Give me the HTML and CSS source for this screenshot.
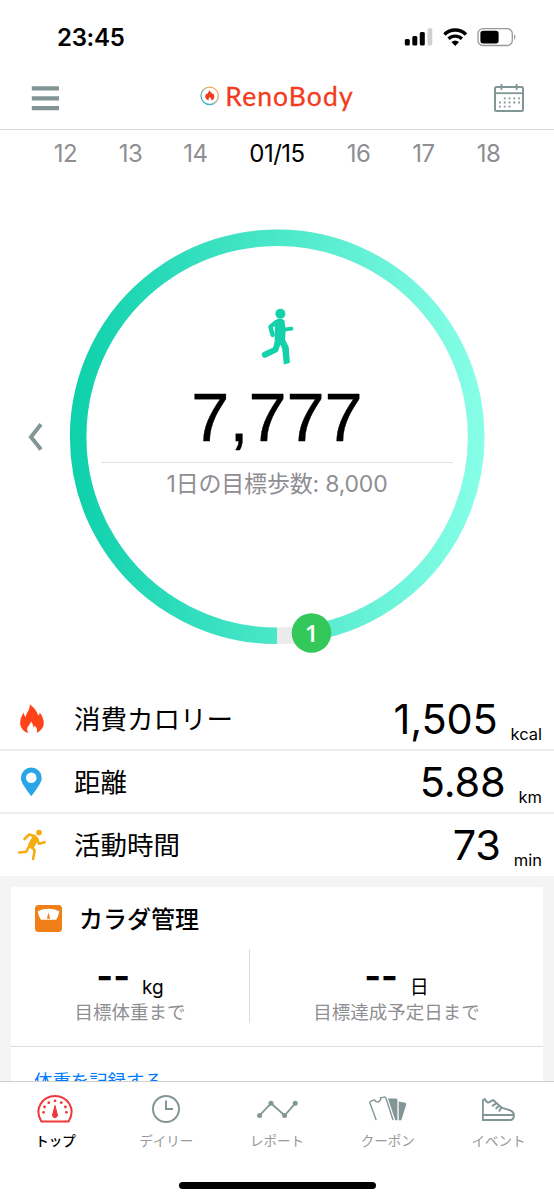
FILE: index.html
```html
<!DOCTYPE html>
<html lang="ja">
<head>
<meta charset="utf-8">
<meta name="viewport" content="width=device-width, initial-scale=1">
<title>RenoBody</title>
<link rel="stylesheet" href="styles.css">
</head>
<body>
<div class="app">
  <div class="status">
    <span class="clock">23:45</span>
    <svg class="status-icons" width="113" height="20" viewBox="0 0 113 20">
      <rect x="0.8" y="11" width="5" height="6.5" rx="1.5"/>
      <rect x="8.3" y="8" width="5" height="9.5" rx="1.5"/>
      <rect x="15.8" y="4" width="5" height="13.5" rx="1.5"/>
      <rect x="23.5" y="0.3" width="4.8" height="17.2" rx="1.5" fill="#cfcfcf"/>
      <g fill="none" stroke="#000" stroke-width="3.3">
        <path d="M40.400 6.500a15.200 15.200 0 0 1 21.600 0"/>
        <path d="M44.500 10.800a9.600 9.600 0 0 1 13.400 0"/>
      </g>
      <path d="M47.400 14q3.800-3.200 7.600 0l-3.800 3.900z"/>
      <rect x="74" y="0.700" width="34.300" height="16.800" rx="5" fill="none" stroke="#999" stroke-width="1.300"/>
      <rect x="76.400" y="2.800" width="18.200" height="12.600" rx="2.600"/>
      <path d="M110.200 6.200q2.500 2.700 0 5.600z" fill="#888"/>
    </svg>
  </div>
  <header class="header">
    <svg width="28" height="26" viewBox="0 0 28 26" fill="#829696"><path d="M0.800 1.300h27.200v4.200H0.800zM0.800 11.200h27.200v4.200H0.800zM0.800 21h27.200v4.200H0.800z"/></svg>
    <div class="brand">
      <svg width="20" height="20" viewBox="0 0 20 20">
        <defs><linearGradient id="logo-ring" x1="0" y1="1" x2="1" y2="0"><stop offset="0.2" stop-color="#35b5cf"/><stop offset="0.75" stop-color="#f4a64c"/></linearGradient></defs>
        <circle cx="9.700" cy="9.800" r="8.700" fill="none" stroke="url(#logo-ring)" stroke-width="1.300"/>
        <path d="M9.500 4.600l3 3.500.6-.9q1.700 2.200 1.200 4.200c-.3 1.500-1.500 2.300-2.900 2.900q.1-2.100-1.500-3.400-1.700 1.300-1.400 3.500-3.100-.9-3.300-3.400-.1-1.800 1.200-3.600l.7.800z" fill="#f23c1c"/>
      </svg>
      <span class="brand-name">RenoBody</span>
    </div>
    <svg width="30" height="29" viewBox="0 0 30 29" fill="none" stroke="#829696">
      <rect x="1" y="4" width="28" height="24" rx="1.500" stroke-width="2"/>
      <path d="M1 10.200h28" stroke-width="1.800"/><path d="M7.400 1v6M22.600 1v6" stroke-width="1.800"/>
      <path d="M9.800 15.300h17M5 19.500h22M5 23.700h12" stroke-width="1.800" stroke-dasharray="1.800 3"/>
    </svg>
  </header>
  <nav class="dates">
    <span>12</span><span>13</span><span>14</span><span class="current">01/15</span><span>16</span><span>17</span><span>18</span>
  </nav>
  <section class="goal">
    <svg class="prev" width="15" height="30" viewBox="0 0 15 30" fill="none" stroke="#829696" stroke-width="4"><path d="M13 2.200L3 15l10 12.600"/></svg>
    <div class="dial">
      <svg class="ring" width="416" height="416" viewBox="0 0 416 416">
        <defs><linearGradient id="ring-fill" gradientUnits="userSpaceOnUse" x1="0" y1="208" x2="416" y2="208"><stop offset="0" stop-color="#0dd0ab"/><stop offset="1" stop-color="#88ffe8"/></linearGradient></defs>
        <circle cx="208" cy="207.800" r="199" fill="none" stroke="#ebebeb" stroke-width="16.500"/>
        <path d="M208 406.800A199 199 0 1 1 242.600 403.800" fill="none" stroke="url(#ring-fill)" stroke-width="16.500"/>
        <circle cx="242.500" cy="404" r="19.800" fill="#34c759"/>
      </svg>
      <span class="laps">1</span>
      <svg class="walker" width="33" height="57" viewBox="0 0 33 57" fill="none" stroke="#12d1ab" stroke-linecap="round" stroke-linejoin="round">
        <circle cx="19.400" cy="5.800" r="5" fill="#12d1ab" stroke="none"/>
        <path d="M15 13q4-3 7.600 0l1 10.700L22.600 36h-8z" fill="#12d1ab" stroke-width="2"/>
        <path d="M15 14.200L9.400 18.900l2.300 8" stroke-width="4.400"/>
        <path d="M23 21.700l7.500-1" stroke-width="3.800"/>
        <path d="M17 34l-2.500 7.600L3.800 46.700" stroke-width="6"/>
        <path d="M17.500 31h5.500l4 8 1.200 15.300-4.700 1.400-1.700-15.200z" fill="#12d1ab" stroke-width="1.400"/>
      </svg>
      <div class="steps">7,777</div>
      <div class="target">1日の目標歩数: 8,000</div>
    </div>
  </section>
  <section class="metrics">
    <div class="metric">
      <svg width="30" height="32" viewBox="0 0 30 32" fill="#ff4319"><path d="M11.600 1.500C16 4 19.200 8.500 20.200 12.600q1.500-1.100 1.600-3C28 18.500 27 25.500 18.700 30q1.400-4.800-2.200-7.600-.4 1.400-1 2.300-.2-4-2.600-6.500c.1 3.300-4.200 5.400-3.700 8.200q.2 2.200 1 3.600C2.500 27.500-1 19.500 5.800 9.600q0 3 1.800 4.700C8.300 9.600 12.400 6.500 11.600 1.500z"/></svg>
      <span class="label">消費カロリー</span><span class="value">1,505</span><span class="unit">kcal</span>
    </div>
    <div class="metric">
      <svg width="30" height="32" viewBox="0 0 30 32" fill="#29a5e8"><path fill-rule="evenodd" d="M13.300 1.500a10.400 10.400 0 0 1 10.400 10.400c0 4.300-4 9.600-10.400 18.300C7 21.500 2.900 16.200 2.900 11.900A10.400 10.400 0 0 1 13.300 1.500zm0 4.900a5.300 5.300 0 1 0 0 10.600 5.300 5.300 0 0 0 0-10.600z"/></svg>
      <span class="label">距離</span><span class="value">5.88</span><span class="unit">km</span>
    </div>
    <div class="metric">
      <svg width="30" height="32" viewBox="0 0 30 32" fill="none" stroke="#f4ac12" stroke-width="2.600" stroke-linecap="round" stroke-linejoin="round">
        <circle cx="21" cy="3.600" r="2.900" fill="#f4ac12" stroke="none"/>
        <path d="M6.500 10l4.700-4.500 5.800 1.800"/><path d="M16 7.500l-4.700 8.300 3.400 2.400L19.200 10z" fill="#f4ac12"/><path d="M18.700 9l2.300 5.700 5.600-1.500"/><path d="M12 17l4.700 4.400-1.600 8.500M10.800 17.700l-2.500 5.100-7 .7"/>
      </svg>
      <span class="label">活動時間</span><span class="value">73</span><span class="unit">min</span>
    </div>
  </section>
  <section class="body-panel">
    <div class="card">
      <div class="card-title">
        <svg width="27" height="27" viewBox="0 0 27 27"><rect width="27" height="27" rx="3.500" fill="#f07f17"/><path d="M2.600 6.200Q13.500 1.500 24.400 6.200q-.9 4.600-3.100 8.500H5.900Q3.500 10.800 2.600 6.200z" fill="#fff"/><path d="M13.500 7.400l1.700 6.300h-3.400z" fill="#f07f17"/></svg>
        <h2>カラダ管理</h2>
      </div>
      <div class="remaining">
        <div class="remain weight"><div class="amount"><b>--</b><span>kg</span></div><p>目標体重まで</p></div>
        <div class="remain period"><div class="amount"><b>--</b><span>日</span></div><p>目標達成予定日まで</p></div>
      </div>
      <div class="record"><a>体重を記録する</a></div>
    </div>
  </section>
  <footer class="tabbar">
    <div class="tabs">
      <div class="tab active"><svg width="36" height="30" viewBox="0 0 36 30" fill="none" stroke="#f0383b" stroke-width="2"><path d="M4.500 27.600C-3.500 14.900 5.500 2 18 2s21.500 12.900 13.500 25.600z" stroke-linejoin="round"/><path d="M18 11.500l2.200 8.500a2.500 2.500 0 1 1-4.400 0z" fill="#f0383b" stroke-width="1"/><g fill="#f0383b" stroke="none"><circle cx="6.600" cy="18.300" r="1.400"/><circle cx="7.600" cy="13" r="1.400"/><circle cx="11.800" cy="8.700" r="1.400"/><circle cx="18" cy="6.800" r="1.400"/><circle cx="24.300" cy="8.700" r="1.400"/><circle cx="28.400" cy="13" r="1.400"/><circle cx="29.400" cy="18.300" r="1.400"/></g></svg><span>トップ</span></div>
      <div class="tab"><svg width="30" height="30" viewBox="0 0 30 30" fill="none" stroke="#829696" stroke-width="2"><circle cx="15" cy="15" r="13"/><path d="M15 6.500V15h7"/></svg><span>デイリー</span></div>
      <div class="tab"><svg width="42" height="30" viewBox="0 0 42 30" fill="#829696" stroke="#829696"><path d="M3.600 21.500L15 9.300l13.600 12.200L39.200 9.300" fill="none" stroke-width="1.800"/><g stroke="none"><circle cx="3.600" cy="21.500" r="2.500"/><circle cx="15" cy="9.300" r="2.500"/><circle cx="28.600" cy="21.500" r="2.500"/><circle cx="39.200" cy="9.300" r="2.500"/></g></svg><span>レポート</span></div>
      <div class="tab"><svg width="38" height="30" viewBox="0 0 38 30" fill="#829696"><path d="M7.200 26L1 9.200q-.5-1.500.9-2l3.600-1.400q2 3.600 5.200 1.100 1.700-1.400.8-3.200l3.800-.6q1.200-.2 1.700 1.100L24 26" fill="none" stroke="#829696" stroke-width="1.400"/><path d="M19 4.400l8.200.2q1.200.2 1.200 1.500V26.200h-2.200zM29.700 7.500l6.600 1.200q1.200.5.9 1.800l-4.900 15.700h-2.600z"/></svg><span>クーポン</span></div>
      <div class="tab"><svg width="34" height="30" viewBox="0 0 34 30" fill="none" stroke="#829696" stroke-width="2" stroke-linejoin="round" stroke-linecap="round"><g transform="translate(-1 0)"><path d="M1.800 26V6.300L3.600 5q2.700 5.400 6.300 2.200l2.200-1.100 8.300 7.500 8.800 2.700q3.600 1.500 3.700 4.800c0 3-1.400 5-4 5zM1.800 21h31"/><path d="M11.700 11.600l3.200-2M15.300 14.300l2.700-2.600M18.400 16.600l2-3"/></g></svg><span>イベント</span></div>
    </div>
    <div class="home"></div>
  </footer>
</div>
</body>
</html>
```
FILE: styles.css
```css
* { box-sizing: border-box; }
body { margin: 0; font-family: Inter, "Noto Sans CJK JP", sans-serif; color: #000; background: #fff; }
svg { display: block; flex: none; }
.app { width: 554px; height: 1200px; overflow: hidden; display: flex; flex-direction: column; }
.status { height: 74px; padding: 0 37px 0 57px; display: flex; justify-content: space-between; align-items: center; flex: none; }
.clock { font-size: 24px; font-weight: 600; letter-spacing: -0.3px; }
.status-icons { margin-top: 1px; }
.header { height: 56px; flex: none; border-bottom: 1px solid #d8d8d8; padding: 4px 30px 12px 31px; display: flex; justify-content: space-between; align-items: center; }
.brand { display: flex; align-items: center; gap: 5px; margin-top: -3px; }
.brand-name { font: 400 26.500px/30px Lato, sans-serif; color: #f23c1c; letter-spacing: 1.1px; margin-right: -1px; -webkit-text-stroke: 0.3px #f23c1c; }
.dates { height: 48px; flex: none; padding: 0 33px 1px; display: grid; grid-template-columns: repeat(3, 65px) 98px repeat(3, 65px); align-items: center; text-align: center; font-size: 24px; font-weight: 400; letter-spacing: -0.5px; color: #8e8e93; }
.dates .current { color: #000; }
.goal { height: 510px; flex: none; padding: 51px 69px 0 28px; display: flex; justify-content: space-between; }
.prev { margin-top: 193px; }
.dial { position: relative; width: 416px; height: 416px; display: flex; flex-direction: column; align-items: center; }
.ring { position: absolute; inset: 0; overflow: visible; }
.laps { position: absolute; left: 223px; top: 389px; width: 39px; text-align: center; color: #fff; font: 600 24px/29px "Open Sans", sans-serif; }
.walker { margin-top: 79px; }
.steps { width: 352px; height: 98px; border-bottom: 1px solid #e1e1e1; text-align: center; font: 68.500px/105px "Liberation Sans", sans-serif; -webkit-text-stroke: 0.4px #000; }
.target { margin-top: 4px; font-size: 23px; line-height: 34px; color: #8e8e93; letter-spacing: -0.2px; white-space: nowrap; font-family: Inter, "Noto Sans CJK JP", sans-serif; }
.metrics { flex: none; height: 188px; }
.metric { height: 63px; display: flex; align-items: center; padding: 0 12px 0 18px; border-bottom: 2px solid #ededed; }
.metric:last-child { height: 62px; border-bottom: 0; }
.label { margin: -2px 0 0 26px; font: 26.500px/38px "Noto Sans CJK JP", sans-serif; }
.value { margin-left: auto; font-size: 41.500px; line-height: 50px; letter-spacing: -0.2px; }
.unit { margin-left: 13px; padding-top: 30px; font-size: 16.500px; line-height: 20px; }
.body-panel { height: 205px; overflow: hidden; flex: none; background: #f4f4f4; padding: 11px 11px 0; }
.card { background: #fff; height: 220px; }
.card-title { height: 62px; display: flex; align-items: center; padding-left: 24px; gap: 17px; }
.card-title h2 { margin: -1px 0 0; font: 500 24px/36px "Noto Sans CJK JP", sans-serif; }
.remaining { display: flex; height: 98px; padding-bottom: 23px; border-bottom: 1px solid #ddd; }
.remain { text-align: center; }
.weight { width: 239px; border-right: 1px solid #ddd; }
.period { flex: 1; }
.amount { height: 52px; display: flex; justify-content: center; align-items: flex-start; gap: 12px; }
.amount b { padding-top: 5px; font-size: 36px; line-height: 44px; font-weight: 700; }
.amount span { padding-top: 27px; font-size: 19px; line-height: 24px; }
.remain p { margin: 0; color: #8e8e93; font: 18.500px/20px "Noto Sans CJK JP", sans-serif; }
.record { padding: 19px 23px; font: 18.400px/28px "Noto Sans CJK JP", sans-serif; color: #007aff; }
.tabbar { height: 119px; flex: none; border-top: 1px solid #d0d0d0; display: flex; flex-direction: column; align-items: center; background: #fff; }
.tabs { width: 100%; height: 100px; display: grid; grid-template-columns: repeat(5, 1fr); padding-top: 12px; }
.tab { display: flex; flex-direction: column; align-items: center; color: #999; font: 13.500px/20px "Noto Sans CJK JP", sans-serif; gap: 6px; }
.tab.active { color: #000; font-weight: 500; }
.home { width: 197px; height: 7px; border-radius: 4px; background: #000; }
```
